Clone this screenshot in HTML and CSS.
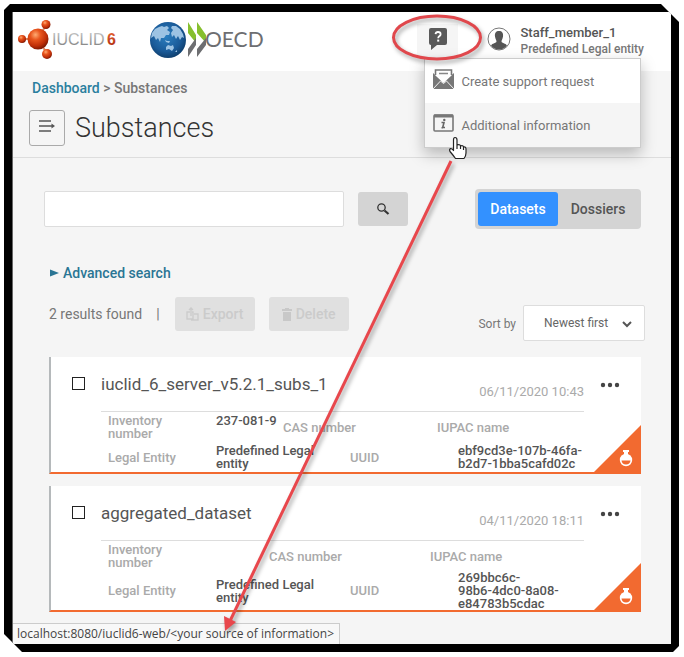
FILE: index.html
```
<!DOCTYPE html>
<html lang="en">
<head>
    <meta charset="UTF-8">
    <meta name="viewport" content="width=device-width, initial-scale=1.0">
    <title>IUCLID 6 - Substances</title>
    <link rel="stylesheet" href="styles.css">
</head>
<body>
    <div class="frame">
        <div class="window">
            <header class="header">
                <svg class="logo-iuclid" width="102" height="44" viewBox="0 0 102 44" role="img" aria-label="IUCLID 6">
                    <defs>
                        <radialGradient id="ball" cx="38%" cy="30%" r="70%">
                            <stop offset="0" stop-color="#ffab72"/>
                            <stop offset="0.35" stop-color="#e8551d"/>
                            <stop offset="0.75" stop-color="#c02f08"/>
                            <stop offset="1" stop-color="#821a03"/>
                        </radialGradient>
                        <linearGradient id="metal" x1="0" y1="0" x2="0" y2="1">
                            <stop offset="0" stop-color="#c9c9c9"/>
                            <stop offset="1" stop-color="#7d7d7d"/>
                        </linearGradient>
                        <linearGradient id="six" x1="0" y1="0" x2="0" y2="1">
                            <stop offset="0" stop-color="#e8683a"/>
                            <stop offset="1" stop-color="#a9260a"/>
                        </linearGradient>
                    </defs>
                    <path d="M4 21H20L28 7M21 22L29 36" fill="none" stroke="#d98a68" stroke-width="2"/>
                    <circle cx="4" cy="21" r="4" fill="url(#ball)"/>
                    <circle cx="28" cy="6.500" r="4.500" fill="url(#ball)"/>
                    <circle cx="29" cy="36" r="5" fill="url(#ball)"/>
                    <circle cx="20" cy="21" r="10.500" fill="url(#ball)"/>
                    <text class="iuclid-name" x="34" y="27" fill="url(#metal)">IUCLID</text>
                    <text class="iuclid-version" x="89" y="27" fill="url(#six)">6</text>
                </svg>
                <svg class="logo-oecd" width="118" height="44" viewBox="0 0 118 44" role="img" aria-label="OECD">
                    <defs>
                        <radialGradient id="globe" cx="45%" cy="40%" r="60%">
                            <stop offset="0" stop-color="#2c7fc0"/>
                            <stop offset="0.7" stop-color="#1a5a98"/>
                            <stop offset="1" stop-color="#10406f"/>
                        </radialGradient>
                    </defs>
                    <circle cx="19" cy="22" r="18" fill="url(#globe)"/>
                    <g fill="#9dc3e3">
                        <path d="M3 15L6 11L10 9L13 8L15 9L18 8L20 10L18 12L21 14L20 17L17 17L15 20L12 20L11 24L9 20L7 22L5 18L2 20Z"/>
                        <path d="M23 8L27 8L31 11L34 16L35 20L33 19L31 22L29 18L27 21L25 17L23 19L22 15L24 12L22 10Z"/>
                        <path d="M17 29L19 27L22 28L24 27L25 30L23 33L20 31L17 32Z"/>
                        <path d="M16 22L18 23L21 23L20 25L17 24ZM26 34L28 32L28 34Z"/>
                    </g>
                    <path d="M39 4L47 17V25L39 15ZM48 4L57 17V25L48 15Z" fill="#86bf2e"/>
                    <path d="M47 20V27L39 39V31ZM57 20V27L48 39V31Z" fill="#6d6e71"/>
                    <text class="oecd-name" x="56" y="29">OECD</text>
                </svg>
                <div class="user-area">
                    <div class="help">
                        <button class="help-button" type="button" aria-label="Help" aria-expanded="true">
                            <svg width="18" height="23" viewBox="0 0 18 23">
                                <path d="M2 0H16Q18 0 18 2V15Q18 17 16 17H8L2 22V17Q0 17 0 15V2Q0 0 2 0Z" fill="#5a5a5a"/>
                                <path d="M6.500 6.200Q6.800 4 9 4Q11.600 4 11.600 6.200Q11.600 7.500 10.200 8.300Q9.200 9 9.200 10.200" fill="none" stroke="#fff" stroke-width="1.800"/>
                                <rect x="8.200" y="11.600" width="2" height="2" fill="#fff"/>
                            </svg>
                        </button>
                        <nav class="help-menu">
                            <a class="menu-item" href="#">
                                <svg width="21" height="20" viewBox="0 0 21 20">
                                    <path d="M0 4L10 13L21 4V20H0Z" fill="#777"/>
                                    <path d="M2.500 1H18.500V6.500L10.500 14L2.500 6.500Z" fill="#fff"/>
                                    <path d="M2.500 6V1H18.500V6" fill="none" stroke="#777" stroke-width="1.600"/>
                                    <path d="M6 4.500H15" stroke="#888" stroke-width="1.400"/>
                                    <path d="M0 20L7.500 12L10.500 14.500L13.500 12L21 20" fill="#777" stroke="#fff" stroke-width="0.900"/>
                                </svg>
                                <span>Create support request</span>
                            </a>
                            <a class="menu-item active" href="#">
                                <svg class="info-icon" width="21" height="18" viewBox="0 0 21 18">
                                    <rect x="1" y="1" width="19" height="16" rx="1" fill="none" stroke="#777" stroke-width="1.600"/>
                                    <path d="M1 2H20" stroke="#777" stroke-width="3"/>
                                    <path d="M8.500 8.500H11L9.700 13.500H12M8.500 13.800H10" fill="none" stroke="#666" stroke-width="1.600"/>
                                    <circle cx="11.300" cy="5.900" r="1.200" fill="#666"/>
                                </svg>
                                <span>Additional information</span>
                            </a>
                        </nav>
                    </div>
                    <svg class="avatar" width="24" height="24" viewBox="0 0 24 24">
                        <circle cx="12" cy="12" r="11" fill="#fff" stroke="#777"/>
                        <path d="M12 4C15 4 16.500 6 16 9.500C15.600 12 14.500 13 14.500 14.500C15 16.500 18.500 16 20 18.500Q17 22.500 12 22.500Q7 22.500 4 18.500C5.500 16 9 16.500 9.500 14.500C9.500 13 8.400 12 8 9.500C7.500 6 9 4 12 4Z" fill="#555"/>
                    </svg>
                    <div class="user">
                        <div class="user-name">Staff_member_1</div>
                        <div class="user-entity">Predefined Legal entity</div>
                    </div>
                </div>
            </header>

            <section class="page-head">
                <div class="breadcrumb"><a href="#">Dashboard</a> &gt; Substances</div>
                <div class="title-row">
                    <button class="toggle-button" type="button" aria-label="Toggle sidebar">
                        <svg width="18" height="14" viewBox="0 0 18 14">
                            <path d="M1 2H13M1 7H15M1 12H13" stroke="#555" stroke-width="1.500"/>
                            <path d="M13.500 4.500L17 7L13.500 9.500Z" fill="#555"/>
                        </svg>
                    </button>
                    <h1>Substances</h1>
                </div>
            </section>

            <main class="main">
                <form class="search-row">
                    <input class="search-input" type="text" aria-label="Search">
                    <button class="search-button" type="button" aria-label="Search">
                        <svg width="14" height="14" viewBox="0 0 14 14">
                            <circle cx="5.500" cy="5.500" r="3.700" fill="none" stroke="#333" stroke-width="1.300"/>
                            <path d="M8.500 8.500L12.500 12" stroke="#333" stroke-width="2.200"/>
                        </svg>
                    </button>
                    <div class="switch">
                        <button class="switch-option selected" type="button">Datasets</button>
                        <button class="switch-option" type="button">Dossiers</button>
                    </div>
                </form>

                <a class="advanced" href="#">
                    <svg width="9" height="8" viewBox="0 0 9 8"><path d="M0 0.500L9 4L0 7.500Z" fill="#2a7594"/></svg>
                    <span>Advanced search</span>
                </a>

                <div class="results-bar">
                    <span class="count">2 results found</span>
                    <span class="divider">|</span>
                    <button class="action" type="button" disabled>
                        <svg width="13" height="14" viewBox="0 0 13 14" fill="none" stroke="#cbcbcb" stroke-width="1.300">
                            <path d="M4 5H1V12H7V5H6M5 9V1M3 3L5 1L7 3M8 7H12V13H5"/>
                        </svg>
                        Export
                    </button>
                    <button class="action" type="button" disabled>
                        <svg width="10" height="13" viewBox="0 0 10 13" fill="#c8c8c8">
                            <path d="M0 1H3V0H7V1H10V3H0ZM1 4H9V13H1Z"/>
                        </svg>
                        Delete
                    </button>
                    <label class="sort-label" for="sort">Sort by</label>
                    <div class="sort">
                        <select id="sort">
                            <option>Newest first</option>
                            <option>Oldest first</option>
                        </select>
                        <svg class="chevron" width="10" height="7" viewBox="0 0 10 7"><path d="M1 1L5 5L9 1" fill="none" stroke="#555" stroke-width="2"/></svg>
                    </div>
                </div>

                <article class="card">
                    <input class="card-check" type="checkbox" aria-label="Select iuclid_6_server_v5.2.1_subs_1">
                    <div class="card-body">
                        <div class="card-head">
                            <h2>iuclid_6_server_v5.2.1_subs_1</h2>
                            <time>06/11/2020 10:43</time>
                        </div>
                        <dl class="row numbers">
                            <dt>Inventory number</dt>
                            <dd>237-081-9</dd>
                            <dt>CAS number</dt>
                            <dt>IUPAC name</dt>
                        </dl>
                        <dl class="row entity">
                            <dt>Legal Entity</dt>
                            <dd>Predefined Legal entity</dd>
                            <dt>UUID</dt>
                            <dd>ebf9cd3e-107b-46fa-b2d7-1bba5cafd02c</dd>
                        </dl>
                    </div>
                    <button class="more" type="button" aria-label="More actions">
                        <svg width="20" height="6" viewBox="0 0 20 6" fill="#444"><circle cx="3" cy="3" r="2.200"/><circle cx="10" cy="3" r="2.200"/><circle cx="17" cy="3" r="2.200"/></svg>
                    </button>
                    <svg class="corner" width="47" height="47" viewBox="0 0 47 47">
                        <path d="M47 0V47H0Z" fill="#f26a30"/>
                        <circle cx="32" cy="35" r="6.200" fill="#fff"/>
                        <path d="M29 25H35V27H34V31H30V27H29Z" fill="#fff"/>
                        <path d="M27.500 35.500H36.500Q36 39.500 32 39.500Q28 39.500 27.500 35.500Z" fill="#f26a30"/>
                    </svg>
                </article>

                <article class="card">
                    <input class="card-check" type="checkbox" aria-label="Select aggregated_dataset">
                    <div class="card-body">
                        <div class="card-head">
                            <h2>aggregated_dataset</h2>
                            <time>04/11/2020 18:11</time>
                        </div>
                        <dl class="row numbers no-inventory">
                            <dt>Inventory number</dt>
                            <dd></dd>
                            <dt>CAS number</dt>
                            <dt>IUPAC name</dt>
                        </dl>
                        <dl class="row entity">
                            <dt>Legal Entity</dt>
                            <dd>Predefined Legal entity</dd>
                            <dt>UUID</dt>
                            <dd>269bbc6c-<br>98b6-4dc0-8a08-e84783b5cdac</dd>
                        </dl>
                    </div>
                    <button class="more" type="button" aria-label="More actions">
                        <svg width="20" height="6" viewBox="0 0 20 6" fill="#444"><circle cx="3" cy="3" r="2.200"/><circle cx="10" cy="3" r="2.200"/><circle cx="17" cy="3" r="2.200"/></svg>
                    </button>
                    <svg class="corner" width="47" height="47" viewBox="0 0 47 47">
                        <path d="M47 0V47H0Z" fill="#f26a30"/>
                        <circle cx="32" cy="35" r="6.200" fill="#fff"/>
                        <path d="M29 25H35V27H34V31H30V27H29Z" fill="#fff"/>
                        <path d="M27.500 35.500H36.500Q36 39.500 32 39.500Q28 39.500 27.500 35.500Z" fill="#f26a30"/>
                    </svg>
                </article>
            </main>

            <div class="status">localhost:8080/iuclid6-web/&lt;your source of information&gt;</div>
        </div>
    </div>

    <!-- callout: circled help button, pointer and arrow to the status bar -->
    <svg class="callout" width="684" height="657" viewBox="0 0 684 657">
        <g class="callout-marks">
            <ellipse cx="437" cy="37.500" rx="43.500" ry="21.500" fill="none" stroke="#e0474c" stroke-width="3"/>
            <path d="M451 161L230 621" fill="none" stroke="#e8474c" stroke-width="3"/>
            <path d="M225 631L224 616L236 622Z" fill="#e8474c"/>
        </g>
        <path d="M455 137.500Q457 137.500 457 140V145Q460 144 460.500 146Q463 145 463.500 147Q466 146.500 466 149V153Q466 156 464 158.500H455.500Q453 155 450 151.500Q449 149.500 450.500 148.500Q452 148.500 453.500 150.500V140Q453.500 137.500 455 137.500ZM457 145V149M460.500 146V149M463.500 147V150" fill="#fff" stroke="#222" stroke-width="1.200" stroke-linejoin="round"/>
    </svg>
</body>
</html>
```
FILE: styles.css
```
* {
    margin: 0;
    padding: 0;
    box-sizing: border-box;
}

body {
    position: relative;
    padding: 4px 5px 5px 4px;
    background: #fff;
    font-family: Roboto, "Liberation Sans", sans-serif;
    font-size: 13px;
    color: #777;
}

button,
input,
select {
    font-family: inherit;
}

button {
    border: none;
    display: flex;
    align-items: center;
    justify-content: center;
}

a {
    text-decoration: none;
}

.frame {
    padding: 8px;
    background: #000;
    clip-path: polygon(0 6px, 6px 0, calc(100% - 18px) 0, 100% 18px, 100% calc(100% - 6px), calc(100% - 6px) 100%, 18px 100%, 0 calc(100% - 18px));
}

.window {
    background: #f5f5f5;
    border-left: 1px solid #666;
}

/* header */
.header {
    display: flex;
    align-items: flex-start;
    height: 59px;
    padding: 6px 27px 0 5px;
    background: #fff;
}

.logo-oecd {
    margin-left: 29px;
}

.iuclid-name {
    font-family: "Liberation Sans", Arial, sans-serif;
    font-size: 16px;
}

.iuclid-version {
    font-family: "Liberation Sans", Arial, sans-serif;
    font-size: 16px;
    font-weight: bold;
}

.oecd-name {
    font-family: Lato, sans-serif;
    font-size: 21px;
    fill: #6d6e71;
}

.user-area {
    display: flex;
    align-items: flex-start;
    margin-left: auto;
    padding-top: 6px;
}

.help {
    position: relative;
    margin-right: 29px;
}

.help-button {
    width: 41px;
    height: 34px;
    padding-bottom: 4px;
    background: #f5f5f5;
}

.help-menu {
    position: absolute;
    top: 34px;
    left: 7px;
    z-index: 5;
    width: 217px;
    border: 1px solid #ccc;
    background: #fff;
    box-shadow: 0 6px 14px rgba(0, 0, 0, 0.25);
}

.menu-item {
    display: flex;
    align-items: center;
    gap: 7px;
    height: 44px;
    padding-left: 8px;
    color: #777;
}

.menu-item svg {
    margin-bottom: 4px;
}

.menu-item.active {
    background: #f5f5f5;
}

.avatar {
    margin: 3px 9px 0 0;
}

.user {
    font-size: 12px;
    font-weight: 500;
    line-height: 17px;
}

.user-name {
    font-size: 13px;
    color: #555;
}

/* page title */
.page-head {
    padding: 8px 16px 11px;
    border-bottom: 1px solid #ddd;
}

.breadcrumb {
    padding-left: 3px;
    font-size: 14px;
    font-weight: 500;
    line-height: 18px;
}

.breadcrumb a {
    color: #2a7f9e;
}

.title-row {
    display: flex;
    align-items: center;
    gap: 10px;
    margin-top: 13px;
}

.toggle-button {
    width: 36px;
    height: 36px;
    padding-bottom: 4px;
    background: transparent;
    border: 1px solid #aaa;
    border-radius: 3px;
}

h1 {
    font-size: 27px;
    font-weight: 300;
    line-height: 36px;
    color: #333;
}

/* search and results */
.main {
    padding: 31px 30px 11px 31px;
}

.search-row {
    display: flex;
    align-items: center;
}

.search-input {
    flex: 0 1 300px;
    min-width: 100px;
    height: 36px;
    padding: 0 8px;
    border: 1px solid #ddd;
    border-radius: 2px;
    background: #fff;
}

.search-button {
    width: 50px;
    height: 34px;
    margin-left: 14px;
    background: #d4d4d4;
    border-radius: 3px;
}

.switch {
    display: flex;
    margin-left: auto;
    padding: 3px;
    background: #d4d4d4;
    border-radius: 4px;
}

.switch-option {
    width: 80px;
    height: 34px;
    background: transparent;
    border-radius: 3px;
    color: #555;
    font-size: 14px;
    font-weight: 500;
}

.switch-option.selected {
    background: #3391ff;
    color: #fff;
}

.advanced {
    display: flex;
    align-items: center;
    gap: 4px;
    margin: 35px 0 15px 6px;
    color: #2a7594;
    font-size: 14px;
    font-weight: 500;
    line-height: 18px;
}

.results-bar {
    display: flex;
    align-items: flex-start;
    height: 60px;
    padding-left: 5px;
    font-size: 14px;
    line-height: 34px;
}

.divider {
    margin: 0 15px 0 14px;
}

.action {
    gap: 4px;
    width: 80px;
    height: 34px;
    margin-right: 14px;
    background: #e0e0e0;
    border-radius: 3px;
    color: #cbcbcb;
    font-size: 14px;
    font-weight: 500;
}

.sort-label {
    margin: 10px 7px 0 auto;
    font-size: 12px;
}

.sort {
    position: relative;
    margin: 8px -4px 0 0;
}

.sort select {
    display: block;
    width: 122px;
    height: 36px;
    padding: 0 20px;
    appearance: none;
    border: 1px solid #ddd;
    border-radius: 2px;
    background: #fff;
    color: #666;
    font-size: 12px;
}

.chevron {
    position: absolute;
    top: 16px;
    right: 13px;
    pointer-events: none;
}

/* result cards */
.card {
    position: relative;
    display: flex;
    align-items: flex-start;
    margin-left: 5px;
    border-left: 2px solid #b5b9bb;
    border-bottom: 2px solid #f26a30;
    background: #fff;
}

.card + .card {
    margin-top: 12px;
}

.card-check {
    width: 13px;
    height: 13px;
    margin: 20px 16px 0 21px;
    appearance: none;
    border: 1px solid #222;
    background: #fff;
}

.card-body {
    flex: 1;
}

.card-head {
    display: flex;
    justify-content: space-between;
    height: 55px;
    border-bottom: 1px solid #ddd;
}

h2 {
    font-size: 17px;
    font-weight: 400;
    line-height: 54px;
    color: #555;
}

time {
    padding-top: 16px;
    font-size: 13px;
    line-height: 38px;
    color: #aaa;
}

.row {
    display: grid;
    grid-template-columns: 108px 134px 108px 1fr;
    align-items: center;
    min-height: 30px;
    padding-left: 7px;
    font-weight: 500;
    line-height: 13px;
    color: #aaa;
}

.row dt:first-child {
    padding-right: 30px;
}

.row dd {
    color: #555;
}

.entity dd:nth-child(2) {
    padding-right: 20px;
}

.row.numbers {
    grid-template-columns: 108px 67px 154px 1fr;
    padding-top: 2px;
    padding-bottom: 2px;
}

.row.no-inventory {
    grid-template-columns: 108px 53px 161px 1fr;
}

.row.numbers dd {
    align-self: start;
}

.more {
    width: 57px;
    height: 56px;
    background: transparent;
    padding-right: 6px;
}

.corner {
    position: absolute;
    right: 0;
    bottom: 0;
}

/* browser status bar */
.status {
    width: max-content;
    padding: 0 5px 0 4px;
    border-top: 1px solid #ccc;
    border-right: 1px solid #ccc;
    background: #f8f8f8;
    color: #444;
    font-family: "Open Sans", "Noto Sans", sans-serif;
    font-size: 12px;
    line-height: 20px;
}

.callout {
    position: absolute;
    top: 0;
    left: 0;
    z-index: 10;
    pointer-events: none;
}

.callout-marks {
    filter: drop-shadow(2px 3px 2px rgba(0, 0, 0, 0.35));
}
```
